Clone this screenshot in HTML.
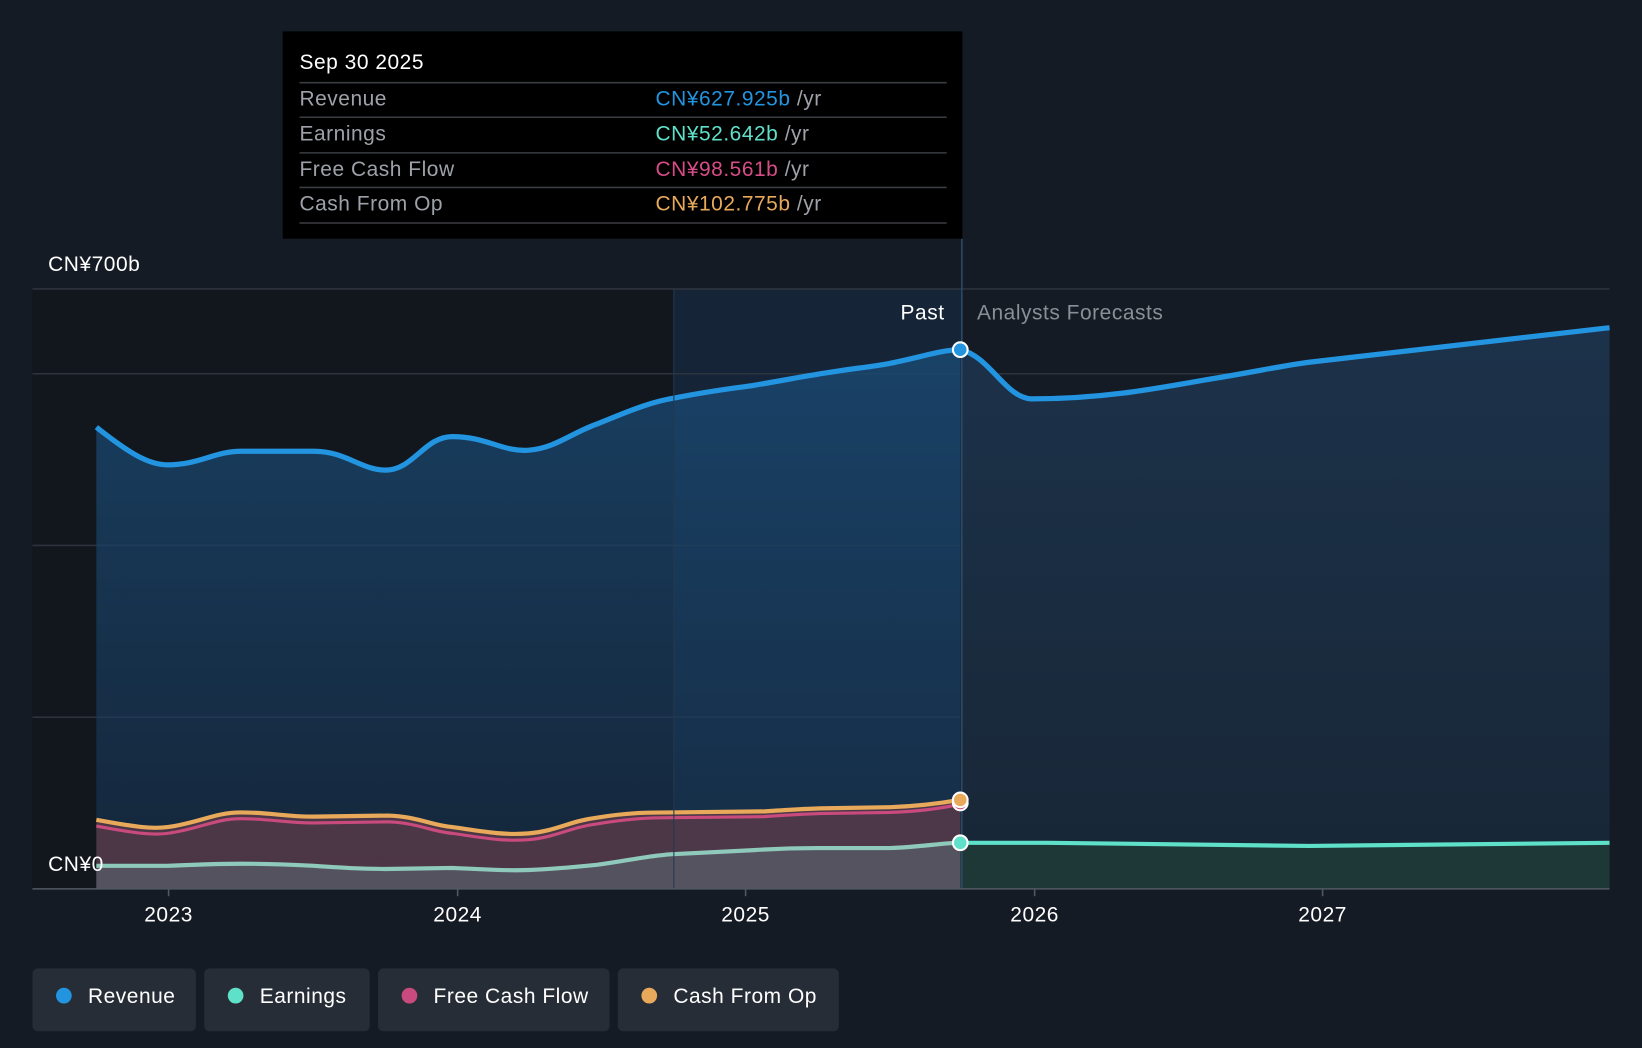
<!DOCTYPE html>
<html><head><meta charset="utf-8"><style>
html,body{margin:0;padding:0;background:#151b24;overflow:hidden}
svg{display:block}
text{font-family:"Liberation Sans",sans-serif;letter-spacing:0.5px}
</style></head><body>
<svg width="1642" height="1048" viewBox="0 0 1568 1001" preserveAspectRatio="none" xmlns="http://www.w3.org/2000/svg">
<defs>
<linearGradient id="pg" x1="0" y1="0" x2="0" y2="1"><stop offset="0" stop-color="#1a4a74" stop-opacity="0.8"/><stop offset="1" stop-color="#173452" stop-opacity="0.55"/></linearGradient>
<linearGradient id="fg" x1="0" y1="0" x2="0" y2="1"><stop offset="0" stop-color="#1c324a"/><stop offset="1" stop-color="#182636"/></linearGradient>
</defs>
<rect width="1568" height="1001" fill="#151b24"/>
<rect x="31" y="276" width="612" height="573" fill="#12161d"/>
<rect x="643" y="276" width="275" height="573" fill="#152437"/>
<g stroke="#2c333d" stroke-width="1.5">
<line x1="31" y1="276" x2="1537" y2="276"/><line x1="31" y1="357" x2="1537" y2="357"/>
<line x1="31" y1="521" x2="1537" y2="521"/><line x1="31" y1="685" x2="1537" y2="685"/>
</g>
<path d="M92,408 C120,430 140,444 160,444 C190,444 205,431 230,431 L300,431 C330,431 345,449 368,449 C395,449 405,417 432,417 C465,417 480,432 505,430 C530,428 545,414 570,405 C600,393 620,384 645,380 C680,373 700,371 720,368 C750,363 770,359 790,356 C815,352 835,350 850,347 C880,341 900,334 917,334 L917,849 L92,849Z" fill="url(#pg)"/>
<path d="M917,334 C945,340 960,380 985,381 C1050,381 1100,372 1150,363 C1200,355 1220,350 1250,346 L1537,313 L1537,849 L917,849Z" fill="url(#fg)"/>
<path d="M92,783 C130,790 145,792 160,790 C190,786 205,776 230,776 C260,776 270,780 300,780 L370,779 C400,780 410,788 432,790 C460,794 480,798 505,796 C530,794 545,784 570,781 C600,776 620,776 640,776 L730,775 C760,773 775,772 790,772 L850,771 C880,770 900,767 917,764 L917,849 L92,849Z" fill="#5a3b48" opacity="0.8"/>
<path d="M917,805 L1000,805 L1250,808 L1537,805 L1537,849 L917,849Z" fill="#1e3838"/>
<path d="M92,827 L160,827 C190,826 200,825 230,825 C260,825 280,826 300,827 C330,829 345,830 368,830 L432,829 C460,830 480,832 505,831 C530,830 550,828 570,826 C600,822 615,818 640,816 L720,812 C750,810 765,810 780,810 L850,810 C880,809 900,805 917,805 L917,849 L92,849Z" fill="#5d6a75" opacity="0.55"/>
<path d="M92,408 C120,430 140,444 160,444 C190,444 205,431 230,431 L300,431 C330,431 345,449 368,449 C395,449 405,417 432,417 C465,417 480,432 505,430 C530,428 545,414 570,405 C600,393 620,384 645,380 C680,373 700,371 720,368 C750,363 770,359 790,356 C815,352 835,350 850,347 C880,341 900,334 917,334 C945,340 960,380 985,381 C1050,381 1100,372 1150,363 C1200,355 1220,350 1250,346 L1537,313" fill="none" stroke="#2394e0" stroke-width="5"/>
<path d="M92,783 C130,790 145,792 160,790 C190,786 205,776 230,776 C260,776 270,780 300,780 L370,779 C400,780 410,788 432,790 C460,794 480,798 505,796 C530,794 545,784 570,781 C600,776 620,776 640,776 L730,775 C760,773 775,772 790,772 L850,771 C880,770 900,767 917,764" fill="none" stroke="#e8a95a" stroke-width="4"/>
<path d="M92,789 C130,796 145,798 160,796 C190,792 205,782 230,782 C260,782 270,786 300,786 L370,785 C400,786 410,794 432,796 C460,800 480,804 505,802 C530,800 545,790 570,787 C600,782 620,781 640,781 L730,780 C760,778 775,777 790,777 L850,776 C880,775 900,772 917,768" fill="none" stroke="#c94b7d" stroke-width="3"/>
<path d="M92,827 L160,827 C190,826 200,825 230,825 C260,825 280,826 300,827 C330,829 345,830 368,830 L432,829 C460,830 480,832 505,831 C530,830 550,828 570,826 C600,822 615,818 640,816 L720,812 C750,810 765,810 780,810 L850,810 C880,809 900,805 917,805" fill="none" stroke="#8fc9bb" stroke-width="4"/>
<path d="M917,805 L1000,805 L1250,808 L1537,805" fill="none" stroke="#5fe0c8" stroke-width="4"/>
<line x1="918.5" y1="228" x2="918.5" y2="849" stroke="#2b4a66" stroke-width="1.5"/>
<line x1="643.5" y1="276" x2="643.5" y2="849" stroke="#24384e" stroke-width="1"/>
<circle cx="917" cy="334" r="7" fill="#2394e0" stroke="#fff" stroke-width="2"/>
<circle cx="917" cy="767" r="7" fill="#c94b7d" stroke="#fff" stroke-width="2"/>
<circle cx="917" cy="764" r="7" fill="#e8a95a" stroke="#fff" stroke-width="2"/>
<circle cx="917" cy="805" r="7" fill="#5fe0c8" stroke="#fff" stroke-width="2"/>
<line x1="31" y1="849" x2="1537" y2="849" stroke="#505862" stroke-width="1.5"/>
<g stroke="#505862" stroke-width="1.5"><line x1="161" y1="849" x2="161" y2="856"/><line x1="437" y1="849" x2="437" y2="856"/><line x1="712" y1="849" x2="712" y2="856"/><line x1="988" y1="849" x2="988" y2="856"/><line x1="1263" y1="849" x2="1263" y2="856"/></g>
<g fill="#fff" font-size="20" text-anchor="middle"><text x="161" y="880">2023</text><text x="437" y="880">2024</text><text x="712" y="880">2025</text><text x="988" y="880">2026</text><text x="1263" y="880">2027</text></g>
<text x="46" y="259" fill="#fff" font-size="20">CN¥700b</text>
<text x="46" y="832" fill="#fff" font-size="20">CN¥0</text>
<text x="902" y="305" fill="#fff" font-size="20" text-anchor="end">Past</text>
<text x="933" y="305" fill="#8a8f96" font-size="20">Analysts Forecasts</text>
<rect x="270" y="30" width="649" height="198" fill="#000"/>
<text x="286" y="66" fill="#fff" font-size="20">Sep 30 2025</text>
<g stroke="#3a3d42" stroke-width="1.5"><line x1="286" y1="79" x2="904" y2="79"/><line x1="286" y1="112" x2="904" y2="112"/><line x1="286" y1="146" x2="904" y2="146"/><line x1="286" y1="179" x2="904" y2="179"/><line x1="286" y1="213" x2="904" y2="213"/></g>
<g font-size="20" fill="#9ea2a8"><text x="286" y="101">Revenue</text><text x="286" y="134">Earnings</text><text x="286" y="168">Free Cash Flow</text><text x="286" y="201">Cash From Op</text></g>
<g font-size="20" font-weight="500"><text x="626" y="101"><tspan fill="#2394e0">CN¥627.925b</tspan><tspan fill="#9ea2a8"> /yr</tspan></text>
<text x="626" y="134"><tspan fill="#5fe0c8">CN¥52.642b</tspan><tspan fill="#9ea2a8"> /yr</tspan></text>
<text x="626" y="168"><tspan fill="#d64d86">CN¥98.561b</tspan><tspan fill="#9ea2a8"> /yr</tspan></text>
<text x="626" y="201"><tspan fill="#e8a95a">CN¥102.775b</tspan><tspan fill="#9ea2a8"> /yr</tspan></text></g>
<g fill="#272d36"><rect x="31" y="925" width="156" height="60" rx="5"/><rect x="195" y="925" width="158" height="60" rx="5"/><rect x="361" y="925" width="221" height="60" rx="5"/><rect x="590" y="925" width="211" height="60" rx="5"/></g>
<circle cx="61" cy="951" r="7.5" fill="#2394e0"/><circle cx="225" cy="951" r="7.5" fill="#5fe0c8"/><circle cx="391" cy="951" r="7.5" fill="#c94b7d"/><circle cx="620" cy="951" r="7.5" fill="#e8a95a"/>
<g fill="#fff" font-size="20" font-weight="500"><text x="84" y="958">Revenue</text><text x="248" y="958">Earnings</text><text x="414" y="958">Free Cash Flow</text><text x="643" y="958">Cash From Op</text></g>
</svg>
</body></html>
